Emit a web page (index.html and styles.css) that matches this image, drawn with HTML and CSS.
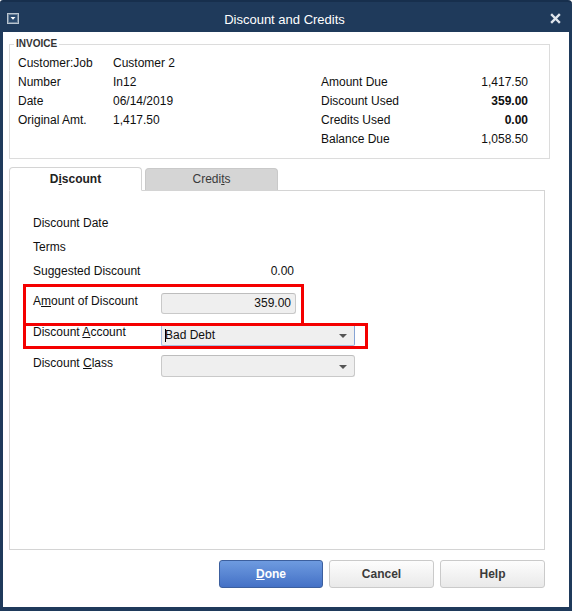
FILE: index.html
```html
<!DOCTYPE html>
<html>
<head>
<meta charset="utf-8">
<title>Discount and Credits</title>
<link rel="stylesheet" href="styles.css">
</head>
<body>
<div class="window">
  <div class="titlebar">
    <span class="menu-icon">
      <svg width="12" height="11" viewBox="0 0 12 11"><rect x="0.5" y="0.5" width="11" height="10" fill="#2b4a6e" stroke="#b9c4cf"/><rect x="1.5" y="1.5" width="9" height="8" fill="#2b4a6e" stroke="#6f849b"/><polygon points="3.5,4 8.5,4 6,6.8" fill="#ffffff"/></svg>
    </span>
    <span class="title">Discount and Credits</span>
    <span class="close-icon">
      <svg width="11" height="11" viewBox="0 0 11 11"><path d="M2 2 L9 9 M9 2 L2 9" stroke="#dfe5ec" stroke-width="2.4" stroke-linecap="square"/></svg>
    </span>
  </div>
  <div class="content">
    <div class="group">
      <span class="group-label">INVOICE</span>
      <div class="inv">
        <div class="inv-left">
          <div class="inv-row"><span class="inv-label">Customer:Job</span><span>Customer 2</span></div>
          <div class="inv-row"><span class="inv-label">Number</span><span>In12</span></div>
          <div class="inv-row"><span class="inv-label">Date</span><span>06/14/2019</span></div>
          <div class="inv-row"><span class="inv-label">Original Amt.</span><span>1,417.50</span></div>
        </div>
        <div class="inv-right">
          <div class="sum-row"><span>Amount Due</span><span>1,417.50</span></div>
          <div class="sum-row"><span>Discount Used</span><span class="strong">359.00</span></div>
          <div class="sum-row"><span>Credits Used</span><span class="strong">0.00</span></div>
          <div class="sum-row"><span>Balance Due</span><span>1,058.50</span></div>
        </div>
      </div>
    </div>

    <div class="tabs">
      <div class="tab tab-active">D<u>i</u>scount</div>
      <div class="tab tab-inactive">Credi<u>t</u>s</div>
    </div>
    <div class="panel">
      <div class="row"><span class="row-label">Discount Date</span></div>
      <div class="row"><span class="row-label">Terms</span></div>
      <div class="row"><span class="row-label">Suggested Discount</span><span class="row-value">0.00</span></div>

      <div class="field-rows">
        <div class="field-row">
          <span class="field-label">A<u>m</u>ount of Discount</span>
          <div class="input input-amount">359.00</div>
        </div>
        <div class="field-row">
          <span class="field-label">Discount <u>A</u>ccount</span>
          <div class="input select select-focus"><span class="caret-text">Bad Debt</span><span class="arrow"></span></div>
        </div>
        <div class="field-row">
          <span class="field-label">Discount <u>C</u>lass</span>
          <div class="input select"><span></span><span class="arrow"></span></div>
        </div>
      </div>
    </div>

    <div class="buttons">
      <div class="btn btn-primary"><u>D</u>one</div>
      <div class="btn">Cancel</div>
      <div class="btn">Help</div>
    </div>
  </div>
  <div class="mark mark-amount"></div>
  <div class="mark mark-account"></div>
</div>
</body>
</html>
```

FILE: styles.css
```css
html, body {
  margin: 0;
  padding: 0;
  background: #ffffff;
}

body {
  font-family: "Liberation Sans", Arial, sans-serif;
  font-size: 12px;
  color: #0f0f0f;
}

.window {
  position: relative;
  width: 572px;
  height: 611px;
  box-sizing: border-box;
  padding: 0 3px 4px 3px;
  background: #1f3a5b;
  border-top: 2px solid #172f4d;
  border-radius: 3px 4px 0 0;
}

.titlebar {
  height: 30px;
  display: flex;
  align-items: flex-start;
  padding: 11px 8px 0 4px;
  box-sizing: border-box;
}

.menu-icon, .close-icon {
  display: block;
  height: 11px;
}

.menu-icon svg, .close-icon svg {
  display: block;
}

.title {
  flex: 1;
  text-align: center;
  color: #ffffff;
  font-size: 13px;
  line-height: 16px;
  margin-top: -1px;
}

.content {
  height: 575px;
  background: #ffffff;
  padding-top: 12px;
  box-sizing: border-box;
}

.group {
  position: relative;
  margin-left: 6px;
  width: 541px;
  height: 115px;
  box-sizing: border-box;
  border: 1px solid #dcdcdc;
  padding: 9px 0 0 8px;
}

.group-label {
  position: absolute;
  top: -8px;
  left: 4px;
  padding: 0 2px;
  background: #ffffff;
  font-size: 10px;
  font-weight: bold;
  color: #333333;
  line-height: 13px;
}

.inv {
  display: flex;
}

.inv-left {
  width: 303px;
}

.inv-row {
  display: flex;
  line-height: 19px;
  height: 19px;
}

.inv-label {
  width: 95px;
}

.inv-right {
  width: 207px;
  padding-top: 19px;
}

.sum-row {
  display: flex;
  justify-content: space-between;
  line-height: 19px;
  height: 19px;
}

.strong {
  font-weight: bold;
}

.tabs {
  display: flex;
  gap: 3px;
  margin: 8px 0 0 6px;
  height: 23px;
  align-items: flex-end;
  position: relative;
  z-index: 1;
}

.tab {
  width: 133px;
  box-sizing: border-box;
  text-align: center;
  border-radius: 4px 4px 0 0;
}

.tab-active {
  height: 24px;
  margin-bottom: -1px;
  background: #ffffff;
  border: 1px solid #d4d4d4;
  border-bottom: 1px solid #ffffff;
  font-weight: bold;
  line-height: 22px;
  color: #222222;
}

.tab-inactive {
  height: 22px;
  background: #d5d5d5;
  border: 1px solid #c9c9c9;
  border-bottom: none;
  line-height: 21px;
  color: #3a3a3a;
}

.panel {
  margin-left: 6px;
  width: 536px;
  height: 360px;
  box-sizing: border-box;
  border: 1px solid #d4d4d4;
  padding: 20px 0 0 23px;
}

.row {
  display: flex;
  height: 24px;
  line-height: 24px;
}

.row-label {
  width: 128px;
}

.row-value {
  width: 133px;
  text-align: right;
}

.field-rows {
  margin-top: 10px;
  display: flex;
  flex-direction: column;
  gap: 9px;
}

.field-row {
  display: flex;
  align-items: flex-start;
  height: 22px;
}

.field-label {
  width: 128px;
  line-height: 14px;
  padding-top: 1px;
}

.input {
  box-sizing: border-box;
  height: 22px;
  background: #efefef;
  border: 1px solid #c9c9c9;
  border-top-color: #bdbdbd;
  border-radius: 3px;
  line-height: 20px;
}

.input-amount {
  width: 135px;
  height: 21px;
  text-align: right;
  padding-right: 4px;
  line-height: 19px;
}

.select {
  width: 194px;
  display: flex;
  justify-content: space-between;
  align-items: center;
  padding: 0 7px 0 3px;
}

.select-focus {
  border-color: #a9bedf;
  border-right-color: #86a4d4;
  border-radius: 2px;
}

.caret-text {
  border-left: 1px solid #000000;
  line-height: 13px;
  padding-left: 0;
  text-indent: -1px;
}

.arrow {
  width: 0;
  height: 0;
  border-left: 4px solid transparent;
  border-right: 4px solid transparent;
  border-top: 4px solid #555555;
  margin-top: 1px;
}

.buttons {
  margin: 10px 0 0 6px;
  width: 536px;
  display: flex;
  justify-content: flex-end;
  gap: 6px;
}

.btn {
  width: 105px;
  height: 28px;
  box-sizing: border-box;
  border: 1px solid #cacaca;
  border-radius: 3px;
  background: linear-gradient(#fdfdfd, #e9e9e9);
  text-align: center;
  line-height: 26px;
  font-weight: bold;
  color: #3b3b3b;
}

.btn-primary {
  width: 104px;
  border-color: #3c5f9e;
  background: linear-gradient(#6e9be0, #4471c6);
  color: #ffffff;
}

.mark {
  position: absolute;
  border: 3px solid #f40000;
  box-sizing: border-box;
}

.mark-amount {
  left: 23px;
  top: 282px;
  width: 281px;
  height: 42px;
}

.mark-account {
  left: 23px;
  top: 321px;
  width: 345px;
  height: 26px;
}
```
